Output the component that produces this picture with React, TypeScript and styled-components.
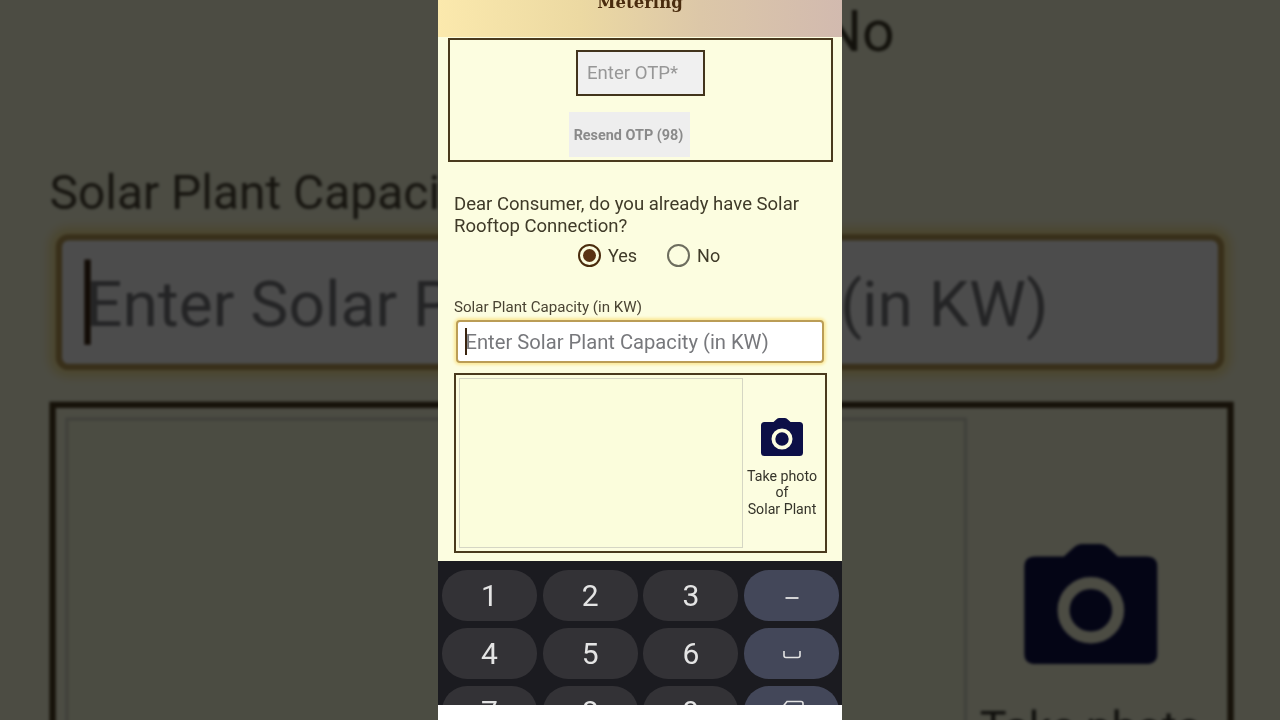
import styled, { createGlobalStyle } from "styled-components";

const GlobalStyle = createGlobalStyle`
    html, body {
        margin: 0;
        padding: 0;
        background: #4b4c40;
        font-family: Roboto, "Liberation Sans", sans-serif;
    }
`;

const Page = styled.main`
    position: relative;
    display: flex;
    justify-content: center;
    width: 1280px;
    height: 720px;
    overflow: hidden;
    background: #4b4c40;
`;

// the video's blurred, darkened copy of the phone behind it
const Backdrop = styled.div`
    position: absolute;
    left: 438px;
    top: 0;
    width: 404px;
    transform-origin: 50% 0;
    transform: translateY(-777px) scale(3.175, 3.16);
    filter: blur(0.55px) brightness(0.3);
`;

const Phone = styled.div`
    position: relative;
    display: flex;
    flex-direction: column;
    width: 404px;
    height: 720px;
    background: #fff;
    > * {
        filter: blur(0.3px);
    }
`;

const Form = styled.div`
    display: flex;
    flex-direction: column;
    height: 561px;
    flex: none;
    overflow: hidden;
    background: #fcfde0;
    color: #3f3a28;
`;

const Header = styled.header`
    display: flex;
    justify-content: center;
    align-items: flex-end;
    flex: none;
    height: 37px;
    padding-bottom: 24px;
    box-sizing: border-box;
    overflow: hidden;
    background: linear-gradient(90deg, #fbe9ad 0%, #ecd9a2 35%, #dcc7a8 65%, #d2baaf 100%);
    font-family: "DejaVu Serif", serif;
    font-weight: 700;
    font-size: 16.5px;
    line-height: 20px;
    color: #4a2c0e;
`;

const OtpBox = styled.section`
    display: flex;
    flex-direction: column;
    align-items: center;
    flex: none;
    box-sizing: border-box;
    width: 385px;
    height: 124px;
    margin: 1px 0 0 10px;
    padding-top: 10px;
    border: 2px solid #4a3a1e;
`;

const OtpField = styled.div`
    display: flex;
    align-items: center;
    box-sizing: border-box;
    width: 129px;
    height: 46px;
    padding-left: 9px;
    border: 2.5px solid #42341c;
    background: #f0f0f0;
    font-size: 18.6px;
    color: #979797;
`;

const ResendButton = styled.div`
    display: flex;
    align-items: center;
    justify-content: center;
    box-sizing: border-box;
    width: 121px;
    height: 45px;
    margin: 16px 22px 0 0;
    padding: 1.5px 2px 0 0;
    background: #eeeeee;
    font-size: 14.4px;
    font-weight: 700;
    color: #8a8a8a;
`;

const Question = styled.p`
    margin: 31px 0 0 16px;
    width: 370px;
    font-size: 18.55px;
    line-height: 22px;
    color: #3f3a28;
`;

const RadioRow = styled.div`
    display: flex;
    align-items: center;
    margin: 6px 0 0 140px;
    height: 24px;
`;

const Radio = styled.span<{ $checked?: boolean }>`
    display: flex;
    align-items: center;
    justify-content: center;
    box-sizing: border-box;
    width: 23px;
    height: 23px;
    border-radius: 50%;
    border: 2px solid ${(props) => (props.$checked ? "#4a2c0e" : "#6d6d5e")};
    &::after {
        content: "";
        display: ${(props) => (props.$checked ? "block" : "none")};
        width: 13px;
        height: 13px;
        border-radius: 50%;
        background: #5a3213;
    }
`;

const RadioText = styled.span<{ $gap: number }>`
    margin: 0 ${(props) => props.$gap}px 0 7px;
    font-size: 18px;
    color: #3f3a28;
`;

const FieldLabel = styled.label`
    margin: 31px 0 0 16px;
    font-size: 15.1px;
    line-height: 18px;
    color: #4a4433;
`;

const CapacityField = styled.div`
    position: relative;
    display: flex;
    align-items: center;
    flex: none;
    box-sizing: border-box;
    width: 368px;
    height: 43px;
    margin: 4px 0 0 18px;
    padding: 1.5px 0 0 7.5px;
    border: 2px solid #bb9d56;
    border-radius: 4px;
    background: #fff;
    box-shadow: 0 0 3px 2px #fbe99a;
    font-size: 20.2px;
    color: #77787c;
`;

const Caret = styled.span`
    position: absolute;
    left: 7px;
    top: 6px;
    width: 2px;
    height: 27px;
    background: #3a2410;
`;

const PhotoBox = styled.section`
    display: flex;
    flex: none;
    box-sizing: border-box;
    width: 373px;
    height: 180px;
    margin: 10px 0 0 16px;
    padding: 3px;
    border: 2.5px solid #4a3a1e;
`;

const Preview = styled.div`
    flex: none;
    box-sizing: border-box;
    width: 284px;
    height: 100%;
    border: 1.5px solid #d5d6c4;
    background: #fbfddc;
`;

const PhotoAction = styled.div`
    display: flex;
    flex-direction: column;
    align-items: center;
    flex: 1;
    padding-top: 39.5px;
    padding-right: 1px;
    font-size: 14.2px;
    line-height: 16.5px;
    text-align: center;
    color: #35342a;
    svg {
        margin-bottom: 12px;
    }
`;

const Keyboard = styled.div`
    display: grid;
    grid-template-columns: repeat(4, 95px);
    grid-auto-rows: 51px;
    column-gap: 5.7px;
    row-gap: 7px;
    flex: none;
    box-sizing: border-box;
    height: 144px;
    padding: 9px 0 0 4px;
    overflow: hidden;
    background: #1b1b20;
`;

const Key = styled.div<{ $action?: boolean }>`
    display: flex;
    align-items: center;
    justify-content: center;
    border-radius: 25px;
    background: ${(props) => (props.$action ? "#434759" : "#333236")};
    font-size: 30px;
    font-weight: 400;
    color: #e4e4e4;
`;

const CameraIcon = () => (
    <svg width="42" height="38" viewBox="0 0 42 38">
        <path
            d="M3.5 4H12.5L15.5 1.2Q16.7 0 18.5 0H23.5Q25.3 0 26.5 1.2L29.5 4H38.5Q42 4 42 7.5V34.5Q42 38 38.5 38H3.5Q0 38 0 34.5V7.5Q0 4 3.5 4Z"
            fill="#0c0f47"
        />
        <circle cx="21" cy="21" r="8.6" fill="none" stroke="#fcfde0" strokeWidth="3.8" />
    </svg>
);

const DashIcon = () => (
    <svg width="14" height="12" viewBox="0 0 14 12" style={{ marginTop: 4 }}>
        <path d="M0.5 6H13.5" stroke="#e4e4e4" strokeWidth="1.8" />
    </svg>
);

const SpaceIcon = () => (
    <svg width="18" height="9" viewBox="0 0 18 9" style={{ marginTop: 1 }}>
        <path d="M1 1V5.5Q1 7.5 3 7.5H15Q17 7.5 17 5.5V1" fill="none" stroke="#e4e4e4" strokeWidth="1.6" />
    </svg>
);

const BackspaceIcon = () => (
    <svg width="24" height="20" viewBox="0 0 24 20" style={{ marginTop: -5 }}>
        <path d="M7 2.5H21Q23 2.5 23 4.5V15.5Q23 17.5 21 17.5H7L1 10Z" fill="none" stroke="#e4e4e4" strokeWidth="1.6" />
    </svg>
);

function FormContent() {
    return (
        <Form>
            <Header>Metering</Header>
            <OtpBox>
                <OtpField>Enter OTP*</OtpField>
                <ResendButton>Resend OTP (98)</ResendButton>
            </OtpBox>
            <Question>Dear Consumer, do you already have Solar Rooftop Connection?</Question>
            <RadioRow>
                <Radio $checked />
                <RadioText $gap={30}>Yes</RadioText>
                <Radio />
                <RadioText $gap={0}>No</RadioText>
            </RadioRow>
            <FieldLabel>Solar Plant Capacity (in KW)</FieldLabel>
            <CapacityField>
                <Caret />
                Enter Solar Plant Capacity (in KW)
            </CapacityField>
            <PhotoBox>
                <Preview />
                <PhotoAction>
                    <CameraIcon />
                    <span>Take photo</span>
                    <span>of</span>
                    <span>Solar Plant</span>
                </PhotoAction>
            </PhotoBox>
        </Form>
    );
}

export default function App() {
    return (
        <Page>
            <GlobalStyle />
            <Backdrop aria-hidden="true">
                <FormContent />
            </Backdrop>
            <Phone>
                <FormContent />
                <Keyboard>
                    <Key>1</Key>
                    <Key>2</Key>
                    <Key>3</Key>
                    <Key $action><DashIcon /></Key>
                    <Key>4</Key>
                    <Key>5</Key>
                    <Key>6</Key>
                    <Key $action><SpaceIcon /></Key>
                    <Key>7</Key>
                    <Key>8</Key>
                    <Key>9</Key>
                    <Key $action><BackspaceIcon /></Key>
                </Keyboard>
            </Phone>
        </Page>
    );
}
